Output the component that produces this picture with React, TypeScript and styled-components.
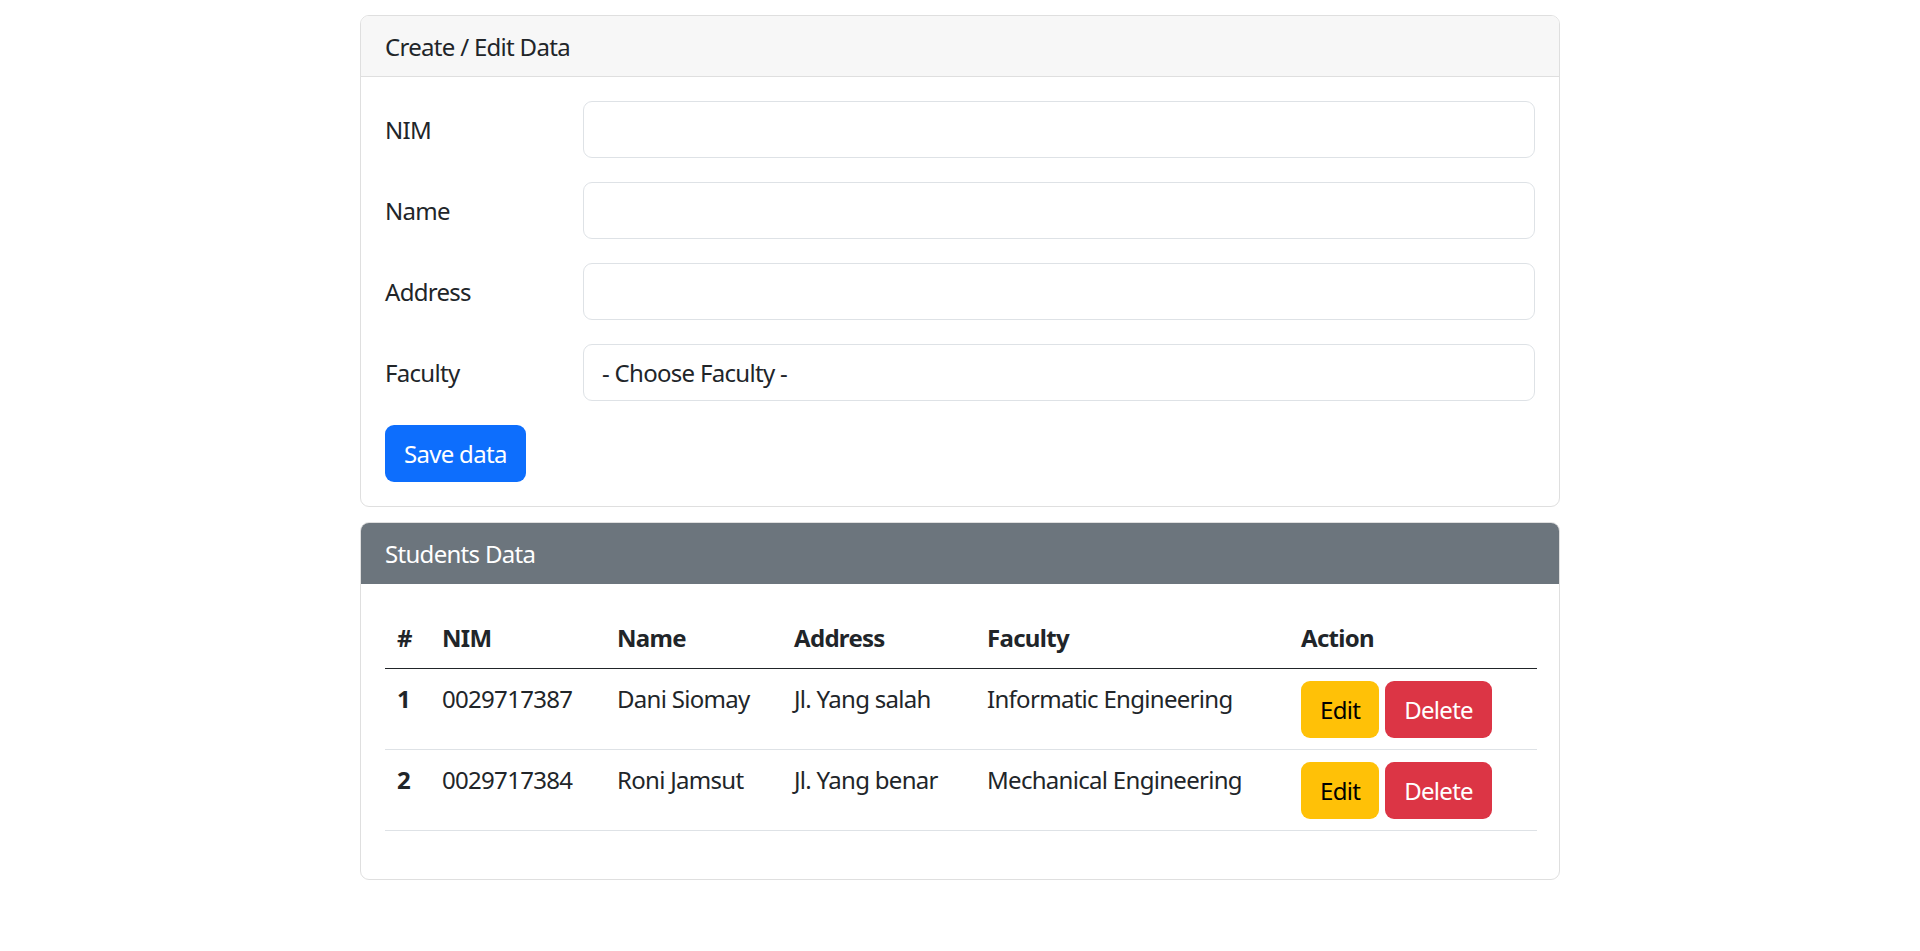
import React from "react";
import styled, { createGlobalStyle } from "styled-components";

const GlobalStyle = createGlobalStyle`
  * { box-sizing: border-box; }
  body {
    margin: 0;
    background: #fff;
    color: #212529;
    font-family: "Noto Sans", "Open Sans", sans-serif;
    font-size: 24px;
    line-height: 1.5;
    letter-spacing: -0.7px;
  }
`;

const Container = styled.div`
  width: 1200px;
  margin: 15px auto 0;
  display: flex;
  flex-direction: column;
  gap: 15px;
`;

const Card = styled.section`
  border: 1px solid #dfdfdf;
  border-radius: 9px;
  overflow: hidden;
  background: #fff;
`;

const CardHeader = styled.div<{ $dark?: boolean }>`
  padding: 12px 24px;
  height: 61px;
  line-height: 37px;
  background: ${(p) => (p.$dark ? "#6c757d" : "#f7f7f7")};
  color: ${(p) => (p.$dark ? "#fff" : "#212529")};
  border-bottom: 1px solid ${(p) => (p.$dark ? "#6c757d" : "#dfdfdf")};
`;

const CardBody = styled.div`
  padding: 24px;
`;

const FormRow = styled.div`
  display: grid;
  grid-template-columns: 162px 1fr;
  column-gap: 36px;
  align-items: center;
  margin-bottom: 24px;
`;

const Label = styled.label`
  line-height: 36px;
`;

const Input = styled.input`
  height: 57px;
  width: 100%;
  border: 1px solid #dee2e6;
  border-radius: 9px;
  padding: 9px 18px;
  font: inherit;
  letter-spacing: inherit;
  color: #212529;
  outline: none;
`;

const Select = styled.select`
  height: 57px;
  width: 100%;
  border: 1px solid #dee2e6;
  border-radius: 9px;
  padding: 9px 18px;
  font: inherit;
  letter-spacing: inherit;
  color: #212529;
  background: #fff;
  appearance: none;
  outline: none;
`;

const Button = styled.button<{ $variant: "primary" | "warning" | "danger" }>`
  height: 57px;
  padding: 9px 18px;
  border: 1px solid transparent;
  border-radius: 9px;
  font: inherit;
  letter-spacing: inherit;
  line-height: 36px;
  cursor: pointer;
  background: ${(p) =>
    p.$variant === "primary" ? "#0d6efd" : p.$variant === "warning" ? "#ffc107" : "#dc3545"};
  color: ${(p) => (p.$variant === "warning" ? "#000" : "#fff")};
`;

const Table = styled.table`
  width: 100%;
  border-collapse: collapse;
  table-layout: fixed;
  margin-bottom: 24px;
`;

const Th = styled.th`
  text-align: left;
  font-weight: 700;
  padding: 12px;
  line-height: 36px;
  border-bottom: 1px solid #212529;
`;

const RowHead = styled.th`
  text-align: left;
  font-weight: 700;
  padding: 12px 12px 11px;
  line-height: 36px;
  vertical-align: top;
  border-bottom: 1px solid #dee2e6;
`;

const Td = styled.td`
  padding: 12px 12px 11px;
  line-height: 36px;
  border-bottom: 1px solid #dee2e6;
  vertical-align: top;
  white-space: nowrap;
`;

const Actions = styled.div`
  display: flex;
  gap: 6px;
`;

const columns = [
  { label: "#", width: 45 },
  { label: "NIM", width: 175 },
  { label: "Name", width: 177 },
  { label: "Address", width: 193 },
  { label: "Faculty", width: 314 },
  { label: "Action", width: 248 },
];

const students = [
  { nim: "0029717387", name: "Dani Siomay", address: "Jl. Yang salah", faculty: "Informatic Engineering" },
  { nim: "0029717384", name: "Roni Jamsut", address: "Jl. Yang benar", faculty: "Mechanical Engineering" },
];

export default function App() {
  return (
    <>
      <GlobalStyle />
      <Container>
        <Card>
          <CardHeader>Create / Edit Data</CardHeader>
          <CardBody>
            <FormRow>
              <Label htmlFor="nim">NIM</Label>
              <Input id="nim" />
            </FormRow>
            <FormRow>
              <Label htmlFor="name">Name</Label>
              <Input id="name" />
            </FormRow>
            <FormRow>
              <Label htmlFor="address">Address</Label>
              <Input id="address" />
            </FormRow>
            <FormRow>
              <Label htmlFor="faculty">Faculty</Label>
              <Select id="faculty" defaultValue="">
                <option value="">- Choose Faculty -</option>
              </Select>
            </FormRow>
            <Button $variant="primary">Save data</Button>
          </CardBody>
        </Card>
        <Card>
          <CardHeader $dark>Students Data</CardHeader>
          <CardBody>
            <Table>
              <colgroup>
                {columns.map((c) => (
                  <col key={c.label} style={{ width: c.width }} />
                ))}
              </colgroup>
              <thead>
                <tr>
                  {columns.map((c) => (
                    <Th key={c.label}>{c.label}</Th>
                  ))}
                </tr>
              </thead>
              <tbody>
                {students.map((s, i) => (
                  <tr key={s.nim}>
                    <RowHead>{i + 1}</RowHead>
                    <Td>{s.nim}</Td>
                    <Td>{s.name}</Td>
                    <Td>{s.address}</Td>
                    <Td>{s.faculty}</Td>
                    <Td>
                      <Actions>
                        <Button $variant="warning">Edit</Button>
                        <Button $variant="danger">Delete</Button>
                      </Actions>
                    </Td>
                  </tr>
                ))}
              </tbody>
            </Table>
          </CardBody>
        </Card>
      </Container>
    </>
  );
}
